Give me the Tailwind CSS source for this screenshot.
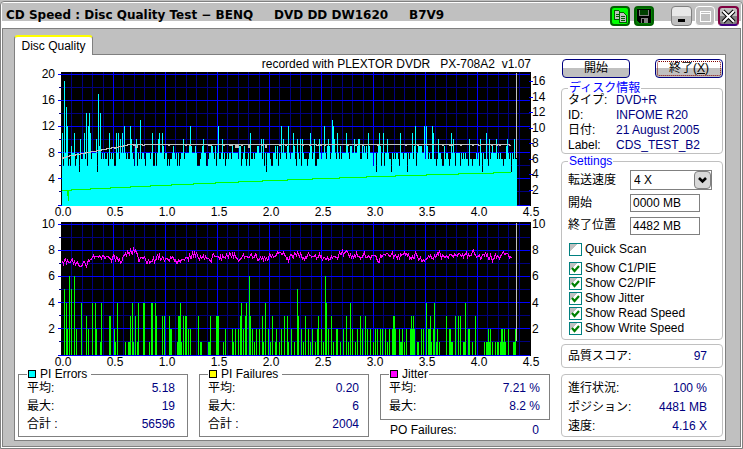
<!DOCTYPE html>
<html lang="ja">
<head>
  <meta charset="UTF-8" />
  <meta name="viewport" content="width=device-width, initial-scale=1.0" />
  <title>CD Speed : Disc Quality Test</title>
  <script src="https://cdn.jsdelivr.net/npm/@tailwindcss/browser@4"></script>
</head>
<body class="bg-[#c0c0c0] pt-px min-h-screen flex flex-col font-['Liberation_Sans','Noto_Sans_CJK_JP',sans-serif] text-[12px] leading-[15px] text-black">
  <div class="flex-1 flex flex-col border border-[#808080] bg-white p-px rounded-t">
    <!-- Title bar -->
    <header class="h-[25px] shrink-0 flex items-start bg-linear-to-b from-[#c0c0c0] from-[18px] via-white via-[18px] to-white pl-1 pr-0.5">
      <h1 class="flex-1 pt-[5px] text-[12px] font-bold whitespace-pre font-['DejaVu_Sans','Noto_Sans_CJK_JP',sans-serif]">CD Speed : Disc Quality Test − BENQ     DVD DD DW1620     B7V9</h1>
      <div class="flex gap-[3px] pt-[3px]">
        <button aria-label="Copy" class="w-[20px] h-[20px] bg-[#00ff00] border-2 border-[#006000] rounded-sm grid place-items-center">
          <svg width="14" height="14" viewBox="0 0 14 14" shape-rendering="crispEdges"><path d="M1.5 1.5h4l2 2v7h-6z" fill="#c0c0c0" stroke="#006000"/><path d="M6.5 3.5h4l3 3v7h-7z" fill="#c0c0c0" stroke="#006000"/><path d="M3 5.5h3M3 7.5h3M8 7.5h4M8 9.5h4M8 11.5h4" stroke="#006000"/></svg>
        </button>
        <button aria-label="Save" class="ml-px w-[20px] h-[20px] bg-[#008000] border-2 border-[#006000] rounded-sm grid place-items-center">
          <svg width="16" height="16" viewBox="0 0 16 16" shape-rendering="crispEdges"><path d="M1 1h14v14H3l-2-2z" fill="#000"/><path d="M3 2h10v6H3zM5 10h7v5H5z" fill="#808080"/><path d="M4 2h8v5H4z" fill="#004000"/><path d="M6 11h2v4H6z" fill="#000"/></svg>
        </button>
        <button aria-label="Minimize" class="ml-3.5 w-[21px] h-[20px] bg-linear-to-b from-[#e8e8e8] from-50% to-[#c0c0c0] to-50% border border-[#808080] rounded-sm grid place-items-center">
          <svg width="15" height="15" viewBox="0 0 15 15" shape-rendering="crispEdges"><path d="M4 10h7v3H4z" fill="#000"/></svg>
        </button>
        <button aria-label="Maximize" disabled class="w-[20px] h-[20px] bg-[#c0c0c0] border border-white rounded-sm grid place-items-center">
          <svg width="15" height="15" viewBox="0 0 15 15" shape-rendering="crispEdges"><path d="M2.5 2.5h10v10h-10zM2 4.5h11" fill="none" stroke="#fff"/></svg>
        </button>
        <button aria-label="Close" class="w-[21px] h-[20px] bg-linear-to-b from-[#c0c0c0] from-50% to-[#808080] to-50% border-2 border-[#800040] border-b-[#400080] rounded-sm grid place-items-center">
          <svg width="15" height="15" viewBox="0 0 15 15"><path d="M2 2l11 11M13 2L2 13" stroke="#000" stroke-width="4"/><path d="M2 2l11 11M13 2L2 13" stroke="#fff" stroke-width="2"/></svg>
        </button>
      </div>
    </header>

    <main class="flex-1 flex flex-col bg-[#c0c0c0] border border-[#808080] pt-[6px] pl-[11px] pr-[14px] pb-[5px]">
      <!-- Tabs -->
      <nav class="flex relative z-10 -mb-px">
        <button class="h-[20px] w-[79px] bg-white border-x border-[#808080] border-t-2 border-t-[#ffff00] rounded-t-sm">Disc Quality</button>
      </nav>

      <div class="flex-1 flex items-start bg-white border border-[#808080]">
        <!-- Charts -->
        <section class="flex-1 min-w-0">
          <svg id="pie-chart" class="block w-full overflow-visible" viewBox="0 0 546 162" shape-rendering="crispEdges" font-size="12"></svg>
          <svg id="pif-chart" class="block w-full overflow-visible" viewBox="0 0 546 152" shape-rendering="crispEdges" font-size="12"></svg>

          <div class="grid grid-cols-3 gap-[11px] pl-[3px] pr-[11px] items-start">
            <fieldset class="min-w-0 border border-[#808080] px-2 pb-[3px]">
              <legend class="flex items-center gap-1 leading-[10px] pl-px pr-1"><span class="size-2 bg-[#00ffff] border border-black"></span>PI Errors</legend>
              <dl class="grid grid-cols-2 leading-[18px]">
                <dt>平均:</dt><dd class="text-right text-[#000080] pr-1">5.18</dd>
                <dt>最大:</dt><dd class="text-right text-[#000080] pr-1">19</dd>
                <dt>合計 :</dt><dd class="text-right text-[#000080] pr-1">56596</dd>
              </dl>
            </fieldset>
            <fieldset class="min-w-0 border border-[#808080] px-2 pb-[3px]">
              <legend class="flex items-center gap-1 leading-[10px] pl-px pr-1"><span class="size-2 bg-[#ffff00] border border-black"></span>PI Failures</legend>
              <dl class="grid grid-cols-2 leading-[18px]">
                <dt>平均:</dt><dd class="text-right text-[#000080] pr-px">0.20</dd>
                <dt>最大:</dt><dd class="text-right text-[#000080] pr-px">6</dd>
                <dt>合計 :</dt><dd class="text-right text-[#000080] pr-px">2004</dd>
              </dl>
            </fieldset>
            <div>
              <fieldset class="min-w-0 border border-[#808080] px-2 pb-1">
                <legend class="flex items-center gap-1 leading-[10px] px-px"><span class="size-2 bg-[#ff00ff] border border-black"></span>Jitter</legend>
                <dl class="grid grid-cols-2 leading-[18px]">
                  <dt>平均:</dt><dd class="text-right text-[#000080] pr-px">7.21 %</dd>
                  <dt>最大:</dt><dd class="text-right text-[#000080] pr-px">8.2 %</dd>
                </dl>
              </fieldset>
              <dl class="flex justify-between pl-[10px] pr-[11px] pt-[3px]"><dt>PO Failures:</dt><dd class="text-[#000080]">0</dd></dl>
            </div>
          </div>
        </section>

        <!-- Side panel -->
        <aside class="w-[164px] shrink-0 pr-0.5 pt-1">
          <div class="flex justify-between pl-px">
            <button class="w-[68px] h-[19px] border border-[#000080] rounded-sm bg-linear-to-b from-white from-50% to-[#c0c0c0] to-50% leading-[15px]">開始</button>
            <button class="w-[68px] h-[19px] border border-[#000080] rounded-sm bg-linear-to-b from-white from-50% to-[#c0c0c0] to-50% leading-[15px] outline-1 outline-dotted -outline-offset-3 outline-[#800000]">終了(<u>X</u>)</button>
          </div>

          <fieldset class="mt-[5px] border border-[#c0c0c0] rounded px-[6px]">
            <legend class="text-[#0000ff] leading-[10px] px-px">ディスク情報</legend>
            <dl class="grid grid-cols-[48px_1fr]">
              <dt>タイプ:</dt><dd class="text-[#000080]">DVD+R</dd>
              <dt>ID:</dt><dd class="text-[#000080]">INFOME R20</dd>
              <dt>日付:</dt><dd class="text-[#000080]">21 August 2005</dd>
              <dt>Label:</dt><dd class="text-[#000080]">CDS_TEST_B2</dd>
            </dl>
          </fieldset>

          <fieldset class="mt-[2px] border border-[#c0c0c0] rounded px-[6px] pt-1 pb-[3px]">
            <legend class="text-[#0000ff] leading-[10px] px-px">Settings</legend>
            <div class="grid grid-cols-[62px_1fr] items-center gap-y-1">
              <label for="speed">転送速度</label>
              <div class="relative w-[82px]">
                <select id="speed" class="block appearance-none w-full h-[20px] border border-[#808080] bg-white pl-[3px] rounded-none"><option>4 X</option></select>
                <span class="absolute right-px top-px w-[17px] h-[18px] bg-[#d8d8d8] border border-[#808080] rounded-sm grid place-items-center pointer-events-none">
                  <svg width="9" height="7" viewBox="0 0 9 7"><path d="M1 1l3.5 3.5L8 1" fill="none" stroke="#000" stroke-width="2.6"/></svg>
                </span>
              </div>
              <label for="start">開始</label>
              <input id="start" type="text" value="0000 MB" class="w-[70px] h-[18px] border border-[#808080] px-[2px]" />
              <label for="end">終了位置</label>
              <input id="end" type="text" value="4482 MB" class="w-[70px] h-[18px] mt-px border border-[#808080] px-[2px]" />
            </div>
            <div id="options" class="mt-[7px] pl-px"></div>
          </fieldset>

          <dl class="mt-[4px] h-[24px] flex items-center justify-between border border-[#c0c0c0] rounded pl-[6px] pr-[15px]">
            <dt>品質スコア:</dt><dd class="text-[#000080]">97</dd>
          </dl>
          <dl class="mt-[6px] grid grid-cols-[1fr_auto] leading-[19px] border border-[#c0c0c0] rounded pl-[6px] pr-[15px] pt-1">
            <dt>進行状況:</dt><dd class="text-right text-[#000080]">100 %</dd>
            <dt>ポジション:</dt><dd class="text-right text-[#000080]">4481 MB</dd>
            <dt>速度:</dt><dd class="text-right text-[#000080]">4.16 X</dd>
          </dl>
        </aside>
      </div>
    </main>
  </div>

  <script>
    const PLOT_X = 46, PLOT_W = 470, PLOT_H = 134, ORIGIN = 47, SAMPLES = 454;

    const options = [
      ['Quick Scan', false], ['Show C1/PIE', true], ['Show C2/PIF', true],
      ['Show Jitter', true], ['Show Read Speed', true], ['Show Write Speed', true],
    ];
    document.getElementById('options').innerHTML = options.map(([label, on], i) => `
      <label class="flex items-center gap-[3px] h-[15px] first:mb-1">
        <span class="grid size-[13px]">
          <input type="checkbox" id="opt-${i}" ${on ? 'checked' : ''} class="peer [grid-area:1/1] appearance-none size-[13px] border border-[#008080] bg-linear-to-br from-[#c0c0c0] from-35% to-white to-35%">
          <svg class="[grid-area:1/1] hidden peer-checked:block pointer-events-none" width="13" height="13" viewBox="0 0 13 13"><path d="M3 6l2.5 3L10 4" fill="none" stroke="#008000" stroke-width="2.2"/></svg>
        </span>${label}
      </label>`).join('');

    // small repeatable noise source for the sample columns
    let seed = 7;
    function noise() {
      seed = (seed * 1103515245 + 12345) % 2147483648;
      return seed / 2147483648;
    }

    // notable samples, column:value
    const piePeaks = {
      0:11, 1:6, 2:19, 3:8, 4:15, 5:12, 6:6, 12:11, 13:6, 17:5, 18:10, 22:11, 24:14, 25:6, 26:12, 27:14, 28:11, 34:10, 35:5, 36:17, 37:9, 38:14,
      46:6, 47:11, 54:11, 56:11, 58:10, 60:11, 62:12, 68:12, 69:10, 72:6, 74:10, 78:13, 90:11, 96:10, 97:11, 100:11, 121:10, 128:12, 141:10, 156:12, 160:10,
      179:6, 187:6, 188:11, 199:10, 201:10, 204:5, 219:12, 221:10, 226:12, 231:11, 234:6, 235:10, 238:10, 240:10, 245:6, 248:11, 252:10, 257:10,
      262:12, 266:10, 270:13, 271:12, 275:11, 284:11, 292:10, 297:10, 306:11, 311:6, 314:5, 317:11, 319:6, 321:11, 325:10, 329:5, 338:11, 345:5,
      350:11, 353:12, 362:12, 364:12, 370:12, 371:11, 376:10, 387:6, 389:11, 391:10, 407:10, 418:10, 420:5, 424:11, 427:10, 434:10, 441:6, 445:10, 449:5, 452:10,
    };
    const pif = {
      2:5, 4:4, 5:2, 7:6, 9:5, 12:6, 14:2, 19:4, 24:3, 26:2, 30:4, 33:4, 34:2, 38:1, 39:4, 47:3, 48:3, 52:2, 53:1, 55:4, 63:1, 66:1, 67:1, 68:3, 70:4, 71:1,
      73:3, 75:1, 76:4, 81:4, 82:4, 87:1, 89:4, 90:4, 93:4, 94:3, 100:3, 102:3, 107:3, 108:2, 109:2, 115:1, 116:3, 117:3, 118:4, 119:1, 121:3, 123:3, 124:3, 126:2, 128:2,
      136:3, 138:1, 139:1, 146:1, 147:1, 148:3, 154:3, 155:3, 156:3, 161:1, 163:2,
      170:2, 171:1, 173:2, 176:2, 178:3, 179:4, 181:2, 183:3, 184:4, 187:6, 188:3, 190:2, 192:1, 194:2, 197:2, 200:3, 201:1, 203:4, 206:2, 208:1, 210:3, 213:1, 214:2, 217:1, 219:2,
      222:3, 225:3, 226:1, 229:2, 232:1, 235:5, 236:3, 239:2, 241:1, 243:3, 246:2, 248:1, 250:2, 253:1, 255:2, 256:3, 259:2, 261:1, 263:6, 264:4, 266:2, 269:3, 271:1, 274:2, 275:2, 278:1,
      281:2, 284:3, 286:1, 288:4, 290:2, 293:1, 295:2, 298:3, 300:2, 303:3, 305:2, 308:2, 311:1, 313:2, 315:2,
      318:2, 320:2, 323:2, 325:1, 327:2, 330:2, 331:3, 332:3, 333:2, 337:2, 338:1, 339:1, 340:2, 342:1, 344:2, 348:2, 349:3, 350:2, 351:3, 352:2, 355:1, 356:1, 359:2, 361:2,
      364:4, 366:2, 367:2, 368:3, 369:1, 371:2, 372:4, 374:1, 375:2, 377:1, 384:3, 387:2, 388:2, 389:1, 390:1, 393:3, 396:3, 398:3, 401:1, 402:1, 403:4, 406:2, 407:2, 410:1, 413:3,
      422:1, 424:1, 425:1, 426:2, 427:1, 428:2, 430:1, 433:1, 435:1, 436:1, 438:1, 439:2, 440:2, 441:1, 442:2, 443:1, 446:2, 451:1, 452:1, 453:2,
    };

    function grid(top, steps, unit, zero) {
      let minor = '', major = '';
      for (let i = 1; i <= 45; i++) {
        const x = Math.round(ORIGIN - 1 + i * 10.4);
        if (i % 5) minor += `M${x}.5 ${top}v${PLOT_H}`;
        else if (i < 45) major += `M${x}.5 ${top}v${PLOT_H}`;
      }
      for (let i = 0; i <= steps; i++) {
        const y = Math.floor(zero - i * unit);
        if (i % 2) minor += `M44 ${y}.5h${PLOT_W + 1}`;
        else major += `M43 ${y}.5h${PLOT_W + 2}`;
      }
      return `<rect x="${PLOT_X}" y="${top}" width="${PLOT_W}" height="${PLOT_H}"/>
        <path d="${minor}" stroke="#000080"/><path d="${major}" stroke="#0000ff"/>`;
    }

    function label(x, y, text, anchor) {
      return `<text x="${x}" y="${y}" text-anchor="${anchor}">${text}</text>`;
    }

    function xLabels(y) {
      let out = '';
      for (let i = 0; i <= 9; i++) out += label(48 + i * 52, y, (i / 2).toFixed(1), 'middle');
      return out;
    }

    function drawPie() {
      const zero = 150;
      let bars = '', read = '', write = '';
      for (let i = 0; i <= SAMPLES; i++) {
        const r = noise();
        const base = i > 262 && i < 320 ? 8 : 7;
        const v = piePeaks[i] || base + (r > 0.9 ? 2 : r > 0.45 ? 1 : r < 0.12 ? -1 : 0);
        const h = Math.round(v * 6.55);
        bars += `M${ORIGIN + i}.5 ${zero + 1}v${-h - 1}`;
        if (i >= 450) continue;
        const t = i / 450;
        const cmd = i ? 'L' : 'M';
        const curve = i < 70 ? 102 - Math.round(i * 0.19) : 89;
        const dip = [74, 75, 174, 176, 187, 204].includes(i) ? 3 : (noise() > 0.9 ? 1 : 0);
        read += `${cmd}${ORIGIN + i} ${curve + dip}.5`;
        write += `${cmd}${ORIGIN + i} ${Math.round(135 - 24 * t + 6 * t * t)}.5`;
      }
      let svg = grid(17, 10, 13.1, zero);
      svg += `<path d="${bars}" stroke="#00ffff"/>
        <path d="${write}" fill="none" stroke="#00ff00"/><path d="M52.5 136v5M53.5 136v10" stroke="#00ff00"/>
        <path d="${read}" fill="none" stroke="#c0c0c0"/>
        <path d="M501.5 18v85" stroke="#c0c0c0"/>`;
      for (let v = 4; v <= 20; v += 4) svg += label(40, Math.round(zero - v * 6.55) + 4, v, 'end');
      for (let v = 2; v <= 16; v += 2) {
        const y = Math.round(150 - v * 7.75);
        svg += `<path d="M514 ${y}.5h4" stroke="#0000ff"/>` + label(517, y + 4, v, 'start');
      }
      svg += xLabels(161) + `<text x="516" y="13" text-anchor="end" xml:space="preserve">recorded with PLEXTOR DVDR   PX-708A2  v1.07</text>`;
      document.getElementById('pie-chart').innerHTML = svg;
    }

    function drawPif() {
      const zero = 138;
      let bars = '', jitter = '', drift = 0;
      for (const [i, v] of Object.entries(pif)) {
        bars += `M${ORIGIN + Number(i)}.5 ${zero}v${-Math.round(v * 13.1)}`;
      }
      for (let i = 0; i < 450; i++) {
        drift = drift * 0.7 + (noise() - 0.5) * 0.35;
        let v = 7.3 + 0.35 * i / 450 + drift + (noise() - 0.5) * 0.4;
        if (i < 20) v -= 0.25;
        if (i > 60 && i < 76) v += 0.5;
        jitter += `${i ? 'L' : 'M'}${ORIGIN + i}.5 ${Math.round(zero - v * 13.1)}`;
      }
      let svg = grid(5, 10, 13.1, zero);
      svg += `<path d="${bars}" stroke="#00ff00"/>
        <path d="${jitter}" fill="none" stroke="#ff00ff"/>
        <path d="M501.5 6v118" stroke="#c0c0c0"/>`;
      for (let v = 2; v <= 10; v += 2) {
        const y = Math.round(zero - v * 13.1) + 4;
        svg += label(40, y, v, 'end') + label(517, y, v, 'start');
      }
      document.getElementById('pif-chart').innerHTML = svg + xLabels(149);
    }

    drawPie();
    drawPif();
  </script>
</body>
</html>
